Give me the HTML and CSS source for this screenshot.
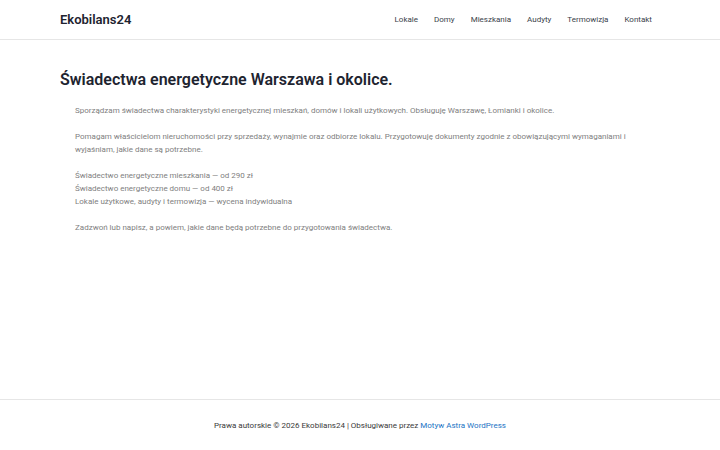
FILE: index.html
```html
<!DOCTYPE html>
<html lang="pl">
<head>
    <meta charset="UTF-8">
    <meta name="viewport" content="width=device-width, initial-scale=1.0">
    <title>Ekobilans24</title>
    <link rel="stylesheet" href="styles.css">
</head>
<body>
    <header class="site-header">
        <div class="header-inner">
            <a class="site-title" href="#">Ekobilans24</a>
            <nav class="main-nav">
                <a href="#">Lokale</a>
                <a href="#">Domy</a>
                <a href="#">Mieszkania</a>
                <a href="#">Audyty</a>
                <a href="#">Termowizja</a>
                <a href="#">Kontakt</a>
            </nav>
        </div>
    </header>

    <main class="content">
        <h1 class="entry-title">Świadectwa energetyczne Warszawa i okolice.</h1>
        <div class="entry-content">
            <p>Sporządzam świadectwa charakterystyki energetycznej mieszkań, domów i lokali użytkowych. Obsługuję Warszawę, Łomianki i okolice.</p>
            <p>Pomagam właścicielom nieruchomości przy sprzedaży, wynajmie oraz odbiorze lokalu. Przygotowuję dokumenty zgodnie z obowiązującymi wymaganiami i wyjaśniam, jakie dane są potrzebne.</p>
            <p>Świadectwo energetyczne mieszkania — od 290 zł<br>
            Świadectwo energetyczne domu — od 400 zł<br>
            Lokale użytkowe, audyty i termowizja — wycena indywidualna</p>
            <p>Zadzwoń lub napisz, a powiem, jakie dane będą potrzebne do przygotowania świadectwa.</p>
        </div>
    </main>

    <footer class="site-footer">
        <p>Prawa autorskie © 2026 Ekobilans24 | Obsługiwane przez <a href="#">Motyw Astra WordPress</a></p>
    </footer>
</body>
</html>
```

FILE: styles.css
```css
/* General Styling */
body {
    font-family: Roboto, "Liberation Sans", sans-serif;
    margin: 0;
    padding: 0;
    background-color: #ffffff;
    color: #3a3a3a;
    min-height: 450px;
    display: flex;
    flex-direction: column;
}

a {
    text-decoration: none;
}

/* Header */
.site-header {
    border-bottom: 1px solid #e6e6e6;
    height: 39px;
}

.header-inner {
    width: 600px;
    margin: 0 auto;
    height: 100%;
    display: flex;
    align-items: center;
    justify-content: space-between;
}

.site-title {
    color: #1e2430;
    font-size: 13px;
    font-weight: 600;
}

.main-nav {
    display: flex;
    gap: 16px;
    padding-right: 8px;
}

.main-nav a {
    color: #3a3f4a;
    font-size: 8px;
}

/* Content */
.content {
    width: 600px;
    margin: 0 auto;
    flex: 1;
}

.entry-title {
    margin: 30px 0 15px;
    font-size: 16px;
    font-weight: 600;
    color: #1e2430;
}

.entry-content {
    padding: 0 15px;
}

.entry-content p {
    margin: 0 0 13px;
    font-size: 8px;
    line-height: 13px;
    color: #808080;
}

/* Footer */
.site-footer {
    border-top: 1px solid #e6e6e6;
    height: 50px;
    display: flex;
    align-items: center;
    justify-content: center;
}

.site-footer p {
    margin: 0;
    font-size: 8px;
    color: #3a3a3a;
}

.site-footer a {
    color: #1a73c4;
}
```
